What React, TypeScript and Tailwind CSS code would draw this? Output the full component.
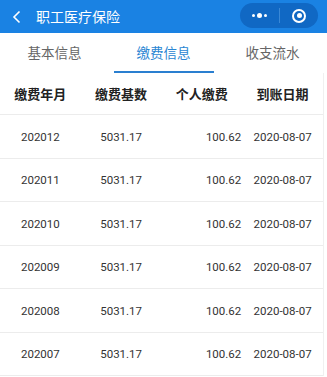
import React from 'react';

const rows = ['202012', '202011', '202010', '202009', '202008', '202007'];

export default function App() {
  return (
    <div className="w-[327px] h-[377px] overflow-hidden bg-white font-['Roboto','Noto_Sans_CJK_SC',sans-serif]">
      {/* Top bar */}
      <div className="h-[33px] bg-[#1a82e3] flex items-center relative">
        <svg width="10" height="14" viewBox="0 0 10 14" className="ml-[12px]">
          <path d="M7.5 1.5 L2 7 L7.5 12.5" fill="none" stroke="white" strokeWidth="1.6" />
        </svg>
        <span className="ml-[14px] text-white text-[14px] leading-none">职工医疗保险</span>
        <div className="absolute right-[9px] top-[3px] w-[78px] h-[25px] rounded-full bg-[#1068c4] flex items-center">
          <div className="w-[39px] flex justify-center items-center gap-[2px]">
            <span className="w-[3px] h-[3px] rounded-full bg-white" />
            <span className="w-[5px] h-[5px] rounded-full bg-white" />
            <span className="w-[3px] h-[3px] rounded-full bg-white" />
          </div>
          <div className="w-px h-[15px] bg-[#3a88d6]" />
          <div className="flex-1 flex justify-center items-center">
            <div className="w-[14px] h-[14px] rounded-full border-2 border-white flex items-center justify-center">
              <div className="w-[5px] h-[5px] rounded-full bg-white" />
            </div>
          </div>
        </div>
      </div>

      {/* Tabs */}
      <div className="grid grid-cols-3 h-[40px] text-[13.5px]">
        <div className="flex items-start justify-center pt-[10px] text-[#666]">基本信息</div>
        <div className="flex flex-col items-center pt-[10px] text-[#2a86d3]">
          <span>缴费信息</span>
          <div className="mt-auto w-[100px] h-[2px] bg-[#2a7fd0]" />
        </div>
        <div className="flex items-start justify-center pt-[10px] text-[#666]">收支流水</div>
      </div>

      {/* Table */}
      <div className="w-[324px] border-r border-[#f0f0f0]">
        <div className="grid grid-cols-4 h-[42px] items-center pt-[3px] text-[13px] font-bold text-[#222] border-b border-[#ececec]">
          <div className="text-center">缴费年月</div>
          <div className="text-center">缴费基数</div>
          <div className="text-center">个人缴费</div>
          <div className="text-center">到账日期</div>
        </div>
        {rows.map((r) => (
          <div key={r} className="grid grid-cols-4 h-[43.5px] items-center pt-[2px] text-[11.5px] text-[#333] border-b border-[#ececec]">
            <div className="text-center">{r}</div>
            <div className="text-center">5031.17</div>
            <div className="text-right pr-px">100.62</div>
            <div className="text-center">2020-08-07</div>
          </div>
        ))}
      </div>
    </div>
  );
}
